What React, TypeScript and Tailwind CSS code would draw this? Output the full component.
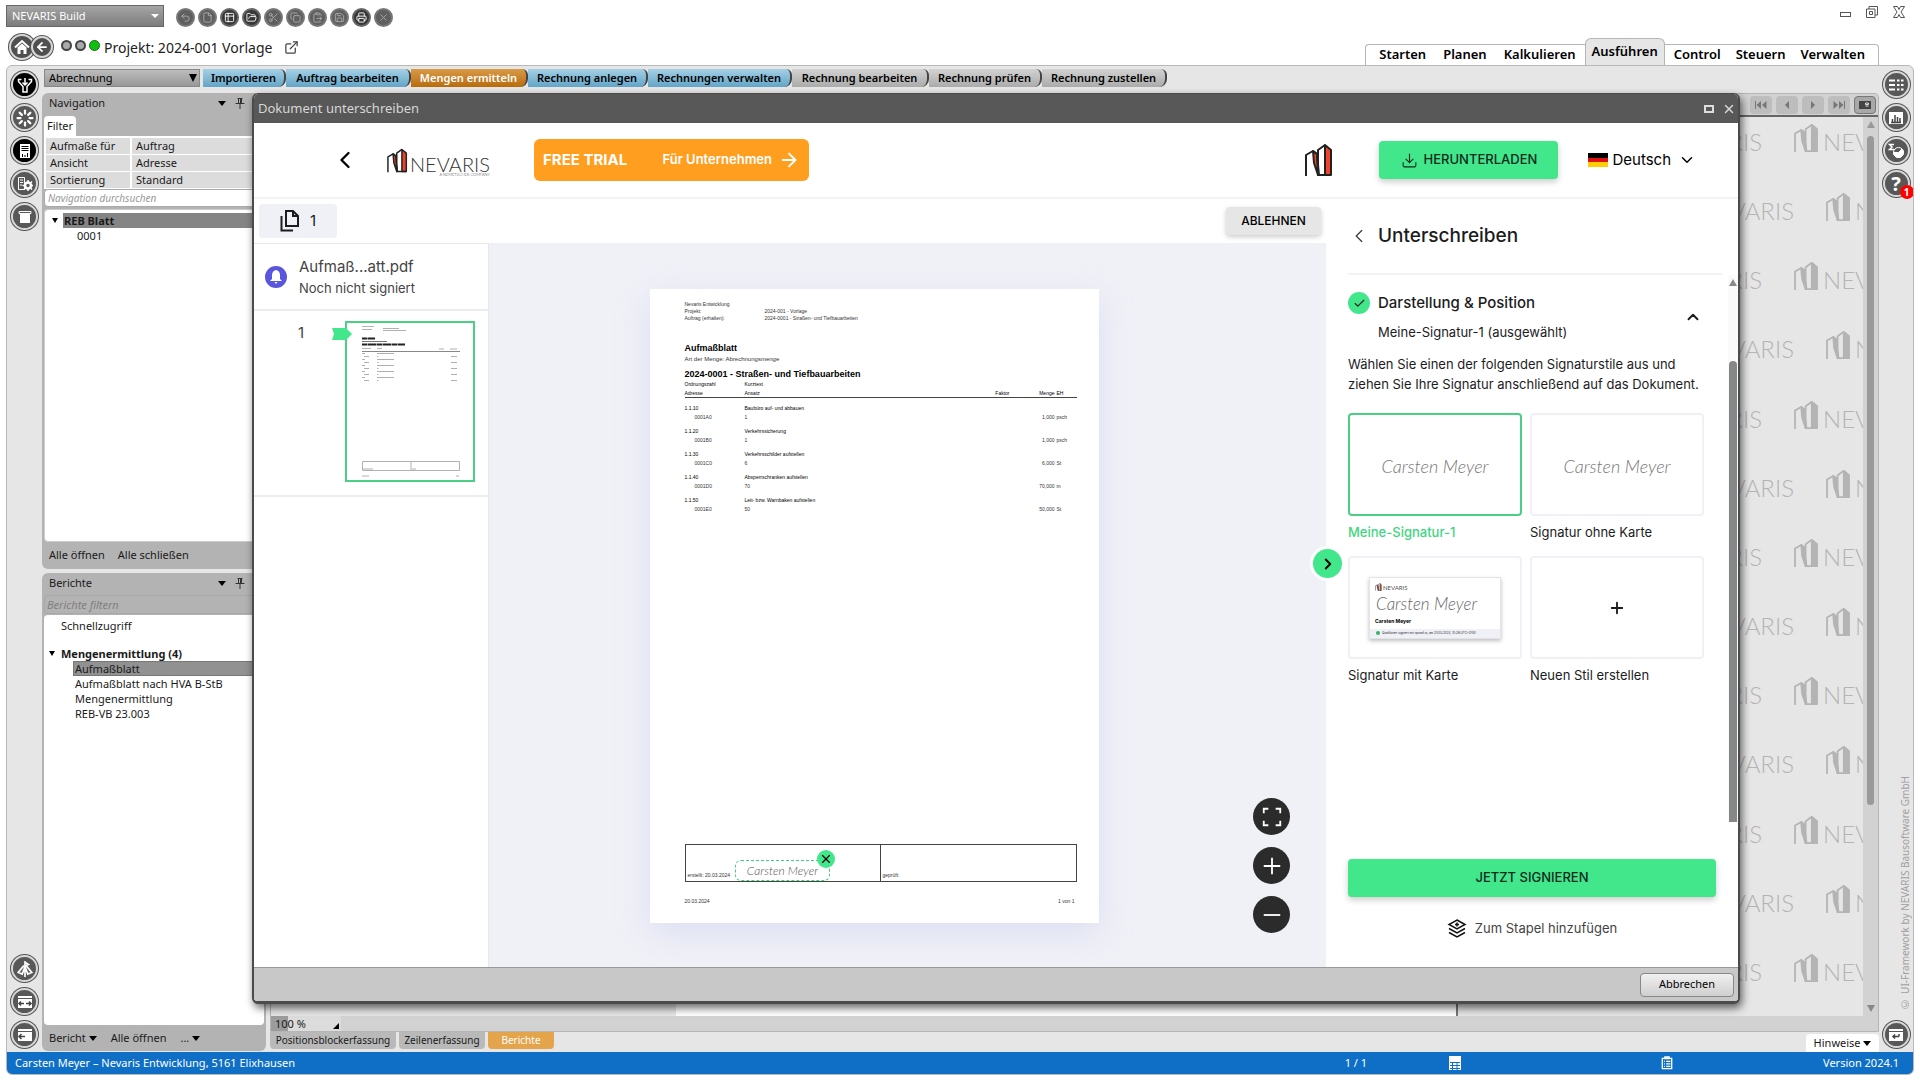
import type { ReactNode } from "react";
import {
  ArrowLeft,
  ArrowRight,
  Check,
  ChevronDown,
  ChevronLeft,
  ChevronRight,
  ChevronUp,
  ClipboardPaste,
  Copy,
  Download,
  ExternalLink,
  File,
  FolderOpen,
  Loader,
  Printer,
  Plus,
  Save,
  Scissors,
  Table2,
  Undo2,
  X,
} from "lucide-react";

const toolbar = [
  { label: "Rückgängig", icon: Undo2, active: false },
  { label: "Neu", icon: File, active: false },
  { label: "Tabelle", icon: Table2, active: true },
  { label: "Öffnen", icon: FolderOpen, active: true },
  { label: "Ausschneiden", icon: Scissors, active: false },
  { label: "Kopieren", icon: Copy, active: false },
  { label: "Einfügen", icon: ClipboardPaste, active: false },
  { label: "Speichern", icon: Save, active: false },
  { label: "Drucken", icon: Printer, active: true },
  { label: "Löschen", icon: X, active: false },
];

const workflow = [
  { label: "Importieren", tone: "blue", width: "w-[83px]" },
  { label: "Auftrag bearbeiten", tone: "blue", width: "w-[125px]" },
  { label: "Mengen ermitteln", tone: "orange", width: "w-[117px]" },
  { label: "Rechnung anlegen", tone: "blue", width: "w-[120px]" },
  { label: "Rechnungen verwalten", tone: "blue", width: "w-[144px]" },
  { label: "Rechnung bearbeiten", tone: "gray", width: "w-[137px]" },
  { label: "Rechnung prüfen", tone: "gray", width: "w-[113px]" },
  { label: "Rechnung zustellen", tone: "gray", width: "w-[125px]" },
];

const toneClass: Record<string, string> = {
  blue: "bg-linear-to-b from-[#a5d0e6] to-[#62a5c6] text-black",
  orange: "bg-linear-to-b from-[#d99a45] to-[#b86c07] text-white",
  gray: "bg-linear-to-b from-[#d2d2d2] to-[#ababab] text-black",
};

const positions = [
  { no: "1.1.10", text: "Baubüro auf- und abbauen", address: "0001A0", formula: "1", amount: "1,000", unit: "psch" },
  { no: "1.1.20", text: "Verkehrssicherung", address: "0001B0", formula: "1", amount: "1,000", unit: "psch" },
  { no: "1.1.30", text: "Verkehrsschilder aufstellen", address: "0001C0", formula: "6", amount: "6,000", unit: "St" },
  { no: "1.1.40", text: "Absperrschranken aufstellen", address: "0001D0", formula: "70", amount: "70,000", unit: "m" },
  { no: "1.1.50", text: "Leit- bzw. Warnbaken aufstellen", address: "0001E0", formula: "50", amount: "50,000", unit: "St" },
];

const zoomButtons = [
  { label: "Einpassen", d: "M3 8V3h5M16 3h5v5M21 16v5h-5M8 21H3v-5" },
  { label: "Vergrößern", d: "M12 3v18M3 12h18" },
  { label: "Verkleinern", d: "M3 12h18" },
];

function Towers({ className, stroke, fill }: { className: string; stroke: string; fill: string }) {
  return (
    <svg viewBox="0 0 28 34" className={className} fill="none" stroke={stroke} strokeWidth="2" strokeLinejoin="round">
      <path d="M8 8l4 3 1 21-4-12z" fill={fill} />
      <path d="M20 2l6 5v25h-6z" fill={fill} />
      <path d="M1 33V12l7-4 4 3 2 21M13 33V7l7-5M13 32h13" />
    </svg>
  );
}

function Watermark() {
  return (
    <div className="flex shrink-0 items-end gap-1 text-[#b4b4b4]">
      <Towers className="h-[30px] w-[25px]" stroke="#b4b4b4" fill="#b4b4b4" />
      <span className="font-['Lato'] text-2xl leading-[22px] font-light">NEVARIS</span>
    </div>
  );
}

function RailButton({ label, black, children }: { label: string; black?: boolean; children: ReactNode }) {
  return (
    <button
      aria-label={label}
      className={`relative flex size-[27px] shrink-0 items-center justify-center rounded-full border-2 border-[#d8d8d8] text-white ring-1 ring-[#555] ${
        black ? "bg-black" : "bg-[#585858]"
      }`}
    >
      {children}
    </button>
  );
}

function Pin() {
  return (
    <svg viewBox="0 0 12 12" className="size-3" fill="none" stroke="#333" strokeWidth="1">
      <path d="M3.500 1.500h5M4.500 1.500v5M7.500 1.500v5M6.500 2v4M1.500 6.500h9M6 6.500V12" />
    </svg>
  );
}

function Caret({ className = "" }: { className?: string }) {
  return <span className={`inline-block border-x-4 border-t-[5px] border-x-transparent border-t-black ${className}`} />;
}

function PanelHeader({ title }: { title: string }) {
  return (
    <div className="flex h-5 items-center pr-5 pl-[7px]">
      <h2 className="flex-1">{title}</h2>
      <button aria-label={`${title} Menü`} className="mr-2 flex">
        <Caret />
      </button>
      <button aria-label={`${title} anheften`}>
        <Pin />
      </button>
    </div>
  );
}

function TitleBar() {
  return (
    <div className="flex h-[65px] shrink-0 justify-between px-[6px]">
      <div>
        <div className="flex h-[28px] items-center gap-3 pt-1">
          <div className="relative">
            <select
              aria-label="Anwendung"
              className="h-[22px] w-[158px] appearance-none border border-[#666] bg-linear-to-b from-[#a5a5a5] to-[#7d7d7d] pl-[5px] text-[11px] text-white"
            >
              <option>NEVARIS Build</option>
            </select>
            <span className="pointer-events-none absolute top-[9px] right-[5px] border-x-4 border-t-4 border-x-transparent border-t-white" />
          </div>
          <div className="flex gap-[3px] pt-[2px]">
            {toolbar.map(({ label, icon: Icon, active }) => (
              <button
                key={label}
                aria-label={label}
                className={`flex size-[19px] items-center justify-center rounded-full border-2 ${
                  active ? "border-[#666] bg-[#383838] text-white" : "border-[#777] bg-[#5f5f5f] text-[#aaa]"
                }`}
              >
                <Icon className="size-[11px]" />
              </button>
            ))}
          </div>
        </div>
        <div className="flex h-[37px] items-center pt-px pl-[3px] text-[14px] text-[#222]">
          <button aria-label="Start" className="flex size-[26px] items-center justify-center rounded-full border-2 border-[#d8d8d8] bg-[#505050] text-white ring-1 ring-[#555]">
            <svg viewBox="0 0 16 16" className="size-4" fill="none" stroke="currentColor" strokeWidth="2">
              <path d="M1 8.500L8 2l7 6.500" />
              <path d="M3.500 8.500L8 4.500l4.500 4V15H9.500v-4h-3v4h-3z" fill="currentColor" stroke="none" />
            </svg>
          </button>
          <button aria-label="Zurück" className="-ml-1 flex size-[22px] items-center justify-center rounded-full border-2 border-[#d8d8d8] bg-[#505050] text-white ring-1 ring-[#555]">
            <ArrowLeft className="size-[14px]" strokeWidth={3} />
          </button>
          <div className="mb-1 ml-2 flex gap-[3px]">
            <span className="size-[11px] rounded-full border-2 border-[#444] bg-[#aaa]" />
            <span className="size-[11px] rounded-full border-2 border-[#444] bg-[#aaa]" />
            <span className="size-[11px] rounded-full border border-[#157015] bg-[#10c010]" />
          </div>
          <h1 className="ml-1">Projekt: 2024-001 Vorlage</h1>
          <a href="#extern" aria-label="In neuem Fenster öffnen" className="ml-3 text-[#444]">
            <ExternalLink className="size-[15px]" strokeWidth={2} />
          </a>
        </div>
      </div>
      <div className="flex flex-col items-end justify-between">
        <div className="flex items-center gap-[15px] pt-[6px] pr-[9px] text-[#555]">
          <button aria-label="Minimieren" className="mt-1 h-[5px] w-[11px] border border-[#555]" />
          <button aria-label="Wiederherstellen">
            <svg viewBox="0 0 12 12" className="size-3" fill="none" stroke="currentColor">
              <path d="M3 3V.500h8.500V9H9M.500 3H9v8.500H.500zM3.500 5.500h3v3h-3z" />
            </svg>
          </button>
          <button aria-label="Schließen">
            <svg viewBox="0 0 12 12" className="size-3" fill="none" stroke="currentColor">
              <path d="M.500.500h4L6 3.500l1.500-3h4L8 6l3.500 5.500h-4L6 8.500l-1.500 3h-4L4 6z" />
            </svg>
          </button>
        </div>
        <nav className="mr-[35px] flex items-end text-[13px] font-semibold text-black">
          <div className="flex h-[21px] items-center gap-[17px] rounded-tl border-t border-l border-[#b5b5b5] pr-[9px] pl-[13px]">
            <a href="#starten">Starten</a>
            <a href="#planen">Planen</a>
            <a href="#kalkulieren">Kalkulieren</a>
          </div>
          <a href="#ausfuehren" aria-current="page" className="flex h-[27px] items-center rounded-t-md border border-b-0 border-[#b5b5b5] bg-[#e6e6e6] px-[6px]">
            Ausführen
          </a>
          <div className="flex h-[21px] items-center gap-[15px] rounded-tr border-t border-r border-[#b5b5b5] pr-[13px] pl-[9px]">
            <a href="#control">Control</a>
            <a href="#steuern">Steuern</a>
            <a href="#verwalten">Verwalten</a>
          </div>
        </nav>
      </div>
    </div>
  );
}

function WindowGlyph({ d }: { d: string }) {
  return (
    <svg viewBox="0 0 16 16" className="size-4">
      <path d="M1 2h14v2H1zM1 5h14v9H1z" fill="currentColor" />
      <path d={d} fill="none" stroke="#444" strokeWidth="1.500" />
    </svg>
  );
}

function LeftRail() {
  return (
    <aside className="flex w-[35px] shrink-0 flex-col items-center gap-[6px] pt-[5px] pb-1">
      <RailButton label="Filter" black>
        <svg viewBox="0 0 16 16" className="size-4" fill="none" stroke="currentColor" strokeWidth="1.500">
          <path d="M4.500 2.500h-3v2l4.500 5V15h4V9.500l4.500-5v-2h-3M8 1v7M5.500 5.500L8 8l2.500-2.500" />
        </svg>
      </RailButton>
      <RailButton label="Aktualisieren">
        <Loader className="size-[18px]" strokeWidth={3} />
      </RailButton>
      <RailButton label="Bericht" black>
        <svg viewBox="0 0 16 16" className="size-4" fill="none">
          <path d="M3 1h10v14H3z" fill="#fff" />
          <path d="M4.500 3.500h7M4.500 5.500h7M4.500 7.500h7M5.500 14v-3M8 14v-2M10.500 14v-4" stroke="#000" />
        </svg>
      </RailButton>
      <RailButton label="Einstellungen">
        <svg viewBox="0 0 16 16" className="size-4" fill="none" stroke="currentColor">
          <path d="M1.500 1.500h6v12h-6zM3 4h3M3 6.500h3M3 9h2" />
          <circle cx="11" cy="9.500" r="3" strokeWidth="2.500" />
          <path d="M11 4v2M11 13v2M5.500 9.500h2M14.500 9.500h1.500M7 5.500l1.500 1.500M13.500 12l1.500 1.500M7 13.500l1.500-1.500M13.500 7L15 5.500" strokeWidth="1.500" />
        </svg>
      </RailButton>
      <RailButton label="Ablage">
        <svg viewBox="0 0 16 16" className="size-4">
          <path d="M2 2.500h12v2H2z" fill="none" stroke="#fff" />
          <path d="M3 5h10v9H3z" fill="#fff" />
        </svg>
      </RailButton>
      <div className="flex-1" />
      <RailButton label="Kompass">
        <svg viewBox="0 0 16 16" className="size-[18px]" fill="none" stroke="currentColor" strokeWidth="1.500">
          <path d="M8 1v14M8 2l3 2-3 1zM7 5l-5 6 3.500 1.500L8 6l2.500 6.500L14 11 9 5" />
        </svg>
      </RailButton>
      <RailButton label="Fensterbreite">
        <WindowGlyph d="M2 9.500h5M9 9.500h5M4 7.500l-2 2 2 2M12 7.500l2 2-2 2" />
      </RailButton>
      <RailButton label="Einklappen">
        <WindowGlyph d="M2 9.500h6M4.500 7l-2.500 2.500L4.500 12" />
      </RailButton>
    </aside>
  );
}

function NavigationPanel() {
  return (
    <section className="flex h-[476px] flex-col rounded-md bg-[#b3b3b3]">
      <PanelHeader title="Navigation" />
      <div className="flex h-[23px] items-end pl-[2px]">
        <button className="h-5 rounded-t bg-white px-[3px]">Filter</button>
      </div>
      <div className="mx-[2px] bg-white pt-px">
        <table className="w-full border-separate border-spacing-x-[2px] border-spacing-y-px text-left">
          <tbody>
            {[
              ["Aufmaße für", "Auftrag"],
              ["Ansicht", "Adresse"],
              ["Sortierung", "Standard"],
            ].map(([name, value]) => (
              <tr key={name} className="h-4">
                <th className="w-[84px] bg-[#dcdcdc] pl-1 leading-4 font-normal">{name}</th>
                <td className="bg-[#dcdcdc] pl-1 leading-4">{value}</td>
              </tr>
            ))}
          </tbody>
        </table>
      </div>
      <input
        aria-label="Navigation durchsuchen"
        placeholder="Navigation durchsuchen"
        className="mx-[2px] h-[18px] rounded border border-[#aaa] bg-white pl-[3px] text-[10px] italic placeholder:text-[#999]"
      />
      <div className="mx-[2px] mt-[2px] flex-1 rounded border border-[#ccc] bg-white pt-[3px]">
        <button className="flex w-full items-center pl-[7px] text-left font-bold">
          <Caret className="mr-[5px] border-x-[3px] border-t-4" />
          <span className="h-[15px] flex-1 bg-[#858585] pl-px leading-[15px]">REB Blatt</span>
        </button>
        <button className="block pl-[32px] leading-[15px]">0001</button>
      </div>
      <div className="flex h-[27px] items-center gap-[13px] pl-[7px]">
        <button>Alle öffnen</button>
        <button>Alle schließen</button>
      </div>
    </section>
  );
}

function ReportsPanel() {
  return (
    <section className="flex min-h-0 flex-1 flex-col rounded-md bg-[#b3b3b3]">
      <PanelHeader title="Berichte" />
      <input
        aria-label="Berichte filtern"
        placeholder="Berichte filtern"
        className="mx-[2px] mt-[2px] h-[19px] rounded border border-[#a8a8a8] pl-[2px] text-[11px] italic placeholder:text-[#808080]"
      />
      <div className="mx-[2px] mt-px flex-1 rounded bg-white pt-[3px] leading-[15px]">
        <button className="block pl-[17px]">Schnellzugriff</button>
        <button className="mt-[13px] flex items-center pl-[5px] font-bold">
          <Caret className="mr-[6px] border-x-[3px] border-t-4" />
          Mengenermittlung (4)
        </button>
        <div className="flex flex-col items-start pl-[29px]">
          <button className="w-full border border-[#777] bg-[#919191] pl-px text-left leading-[13px]">Aufmaßblatt</button>
          <button className="pl-[2px]">Aufmaßblatt nach HVA B-StB</button>
          <button className="pl-[2px]">Mengenermittlung</button>
          <button className="pl-[2px]">REB-VB 23.003</button>
        </div>
      </div>
      <div className="flex h-[26px] items-center gap-[14px] pl-[7px]">
        <button>
          Bericht <Caret className="align-middle" />
        </button>
        <button>Alle öffnen</button>
        <button>
          ... <Caret className="align-middle" />
        </button>
      </div>
    </section>
  );
}

function Preview() {
  return (
    <section className="flex min-w-0 flex-1 flex-col">
      <div className="flex min-h-0 flex-1 flex-col rounded-t border border-[#b5b5b5] bg-[#d2d2d2]">
        <div className="flex h-[23px] shrink-0 items-center justify-end gap-1 border-b-2 border-[#666] pr-[2px] text-[9px] text-[#777]">
          {["Anfang", "Zurück", "Weiter", "Ende"].map((label, i) => (
            <button key={label} aria-label={label} className="flex h-[18px] w-[22px] items-center justify-center rounded bg-[#bdbdbd]">
              <svg viewBox="0 0 12 8" className="h-2 w-3" fill="currentColor">
                <path
                  d={
                    [
                      "M0 0h1v8H0zM6 0v8L1.500 4zM11.500 0v8L7 4z",
                      "M8 0v8L4 4z",
                      "M4 0l4 4-4 4z",
                      "M.500 0L5 4 .500 8zM6 0l4.500 4L6 8zM11 0h1v8h-1z",
                    ][i]
                  }
                />
              </svg>
            </button>
          ))}
          <button aria-label="Vollbild" className="flex h-[18px] w-[22px] items-center justify-center rounded border border-[#777] bg-[#a8a8a8]">
            <svg viewBox="0 0 12 8" className="h-2 w-3">
              <path d="M0 0h12v8H0z" fill="#444" />
              <path d="M6.500 2h3v1.500h-3zM6.500 5h3" stroke="#ddd" fill="none" />
            </svg>
          </button>
        </div>
        <div className="flex min-h-0 flex-1">
          <div className="relative flex min-w-0 flex-1 flex-col overflow-hidden bg-[#e6e6e6]">
            {Array.from({ length: 13 }, (_, row) => (
              <div key={row} className={`flex min-h-0 flex-1 items-start justify-end gap-8 pt-[6px] ${row % 2 ? "-mr-[88px]" : "-mr-[56px]"}`}>
                <Watermark />
                <Watermark />
              </div>
            ))}
            <div className="absolute bottom-0 left-[405px] h-3 w-[782px] border-r-2 border-[#777] bg-white" />
          </div>
          <div className="flex w-[15px] flex-col items-center pt-1 text-[8px] text-[#888]">
            <span className="border-x-4 border-b-[7px] border-x-transparent border-b-[#999]" />
            <span className="mt-2 w-[7px] flex-1 rounded-full bg-[#999]" />
            <span className="mt-[200px] mb-1 border-x-4 border-t-[7px] border-x-transparent border-t-[#888]" />
          </div>
        </div>
        <div className="flex h-[15px] shrink-0 items-center">
          <label className="relative flex h-[15px] w-[70px] items-center bg-[#dcdcdc]">
            <span className="sr-only">Zoom</span>
            <input defaultValue="100 %" className="h-[15px] w-full bg-linear-to-r from-[#9c9c9c] from-25% to-transparent to-25% pl-1 text-[11px] leading-[15px]" />
            <span className="absolute right-[2px] bottom-[2px] border-b-[6px] border-l-[6px] border-b-black border-l-transparent" />
          </label>
        </div>
      </div>
      <div className="flex h-5 shrink-0 items-start gap-[3px]">
        <button className="h-[17px] w-[126px] rounded-b bg-[#b9b9b9] text-[10px] leading-[17px]">Positionsblockerfassung</button>
        <button className="h-[17px] w-[86px] rounded-b bg-[#b9b9b9] text-[10px] leading-[17px]">Zeilenerfassung</button>
        <button className="h-[17px] w-[66px] rounded-b bg-[#e3a44b] text-[10px] leading-[17px] text-white">Berichte</button>
        <div className="flex-1" />
        <button className="mt-[2px] h-[18px] w-[73px] rounded-t bg-white">
          Hinweise <Caret className="align-middle" />
        </button>
      </div>
    </section>
  );
}

function RightRail() {
  return (
    <aside className="flex w-[34px] shrink-0 flex-col items-center gap-[6px] pt-[5px] pb-1">
      <RailButton label="Liste">
        <svg viewBox="0 0 16 16" className="size-4" stroke="currentColor" strokeWidth="2">
          <path d="M1 3.500h6M1 8h6M1 12.500h6M9 3.500h2.500M9 8h2.500M9 12.500h2.500M13 3.500h2.500M13 8h2.500M13 12.500h2.500" />
        </svg>
      </RailButton>
      <RailButton label="Diagramm">
        <svg viewBox="0 0 16 16" className="size-4">
          <path d="M1 2h14v12H1z" fill="currentColor" />
          <path d="M3 12.500h10M4.500 12V9M7 12V5M9.500 12V7M12 12V8" stroke="#444" strokeWidth="1.500" />
        </svg>
      </RailButton>
      <RailButton label="Summen">
        <svg viewBox="0 0 16 16" className="size-4" fill="none" stroke="currentColor">
          <path d="M6 1.500H1.500L4 4 1.500 6.500H6" strokeWidth="1.500" />
          <circle cx="10.500" cy="9.500" r="5" />
          <path d="M10.500 9.500l3.500-3.500a5 5 0 1 1-8.500 3.500z" fill="currentColor" />
        </svg>
      </RailButton>
      <RailButton label="Hilfe">
        <span className="text-xl leading-5 font-bold">?</span>
        <span className="absolute -right-[6px] -bottom-1 flex size-[14px] items-center justify-center rounded-full bg-[#f00] text-[10px] leading-[14px] font-bold">
          1
        </span>
      </RailButton>
      <div className="mr-[2px] flex flex-1 items-end self-end pb-1">
        <span className="rotate-180 text-[10px] leading-3 text-[#a0a0a0] [writing-mode:vertical-rl]">
          © UI-Framework by NEVARIS Bausoftware GmbH
        </span>
      </div>
      <RailButton label="Ausklappen">
        <WindowGlyph d="M5 9.500h6M7 7.500l-2 2 2 2M11 9.500V7" />
      </RailButton>
    </aside>
  );
}

function SignatureStyle({ selected, label, children }: { selected?: boolean; label: string; children: ReactNode }) {
  return (
    <button className="group flex flex-col gap-2 text-left" aria-pressed={selected}>
      <span
        className={`flex h-[103px] w-full items-center justify-center rounded border-2 bg-white ${
          selected ? "border-[#4bcf84]" : "border-[#f0f1f7]"
        }`}
      >
        {children}
      </span>
      <span className={`leading-4 ${selected ? "font-medium text-[#3fd681]" : ""}`}>{label}</span>
    </button>
  );
}

function Thumbnail() {
  return (
    <svg viewBox="0 0 126 157" className="h-[157px] w-[126px]" fill="none" stroke="#b0b0b0">
      <path d="M15 3.500h12M15 6.500h10M36 5.500h16M36 7.500h23M15 25.500h9M30 25.500h5M92 26h5M103 26h7" />
      <path d="M15 18.500h25" stroke="#777" />
      <path d="M15 15.500h13M15 21.500h43" stroke="#222" strokeWidth="2" strokeDasharray="5 .5 9 .5" />
      <path d="M15 28.500h98" stroke="#888" />
      {[0, 6, 12, 18, 24].map((y) => (
        <path key={y} d={`M15 ${30.5 + y}h3M17 ${33.5 + y}h5M30 ${30.5 + y}h17M30 ${33.5 + y}h1.500M104 ${33.5 + y}h6`} />
      ))}
      <path d="M15.500 138.500h97v9h-97zM64 138v10M16 146h10M65 146h4M15 153h7M109 153h3" />
    </svg>
  );
}

function DocumentPage() {
  return (
    <article className="relative flex h-[634px] w-[449px] flex-col bg-white pt-3 pr-[22px] pb-[18px] pl-[35px] font-['Liberation_Sans'] text-[5px] leading-[7px] text-[#333] shadow-[0_10px_30px_rgba(190,195,235,0.4)]">
      <dl className="grid grid-cols-[80px_1fr]">
        <dt className="col-span-2">Nevaris Entwicklung</dt>
        <dt>Projekt:</dt>
        <dd>2024-001 - Vorlage</dd>
        <dt>Auftrag (erhalten):</dt>
        <dd>2024-0001 - Straßen- und Tiefbauarbeiten</dd>
      </dl>
      <h2 className="mt-5 text-[9px] leading-[12px] font-bold text-black">Aufmaßblatt</h2>
      <p className="mt-[1px] text-[6px] leading-[8px]">Art der Menge: Abrechnungsmenge</p>
      <h3 className="mt-[5px] mb-[1px] text-[9px] leading-[12px] font-bold text-black">2024-0001 - Straßen- und Tiefbauarbeiten</h3>
      <table className="w-full table-fixed text-left">
        <colgroup>
          <col className="w-[60px]" />
          <col />
          <col className="w-[60px]" />
          <col className="w-[45px]" />
          <col className="w-[22px]" />
        </colgroup>
        <thead className="border-b border-[#444] text-black">
          <tr>
            <th className="pb-[2px] font-normal">Ordnungszahl</th>
            <th className="pb-[2px] font-normal">Kurztext</th>
          </tr>
          <tr>
            <th className="font-normal">Adresse</th>
            <th className="font-normal">Ansatz</th>
            <th className="text-right font-normal">Faktor</th>
            <th className="text-right font-normal">Menge</th>
            <th className="pl-[2px] font-normal">EH</th>
          </tr>
        </thead>
        {positions.map((p) => (
          <tbody key={p.no}>
            <tr className="text-black">
              <td className="pt-[7px]">{p.no}</td>
              <td className="pt-[7px]">{p.text}</td>
            </tr>
            <tr>
              <td className="pt-[2px] pl-[10px]">{p.address}</td>
              <td className="pt-[2px]">{p.formula}</td>
              <td />
              <td className="pt-[2px] text-right">{p.amount}</td>
              <td className="pt-[2px] pl-[2px]">{p.unit}</td>
            </tr>
          </tbody>
        ))}
      </table>
      <div className="mt-auto grid h-[38px] grid-cols-2 border border-[#444]">
        <div className="flex items-end border-r border-[#444] pb-[2px] pl-[2px]">
          <span>erstellt: 20.03.2024</span>
          <div className="relative -mb-[2px] ml-[5px] flex h-[21px] w-[95px] items-center justify-center rounded-md border border-dashed border-[#3fcf7d] font-['Lato'] text-[12px] font-light text-[#555] italic">
            Carsten Meyer
            <button aria-label="Signatur entfernen" className="absolute -top-[11px] -right-[6px] flex size-[18px] items-center justify-center rounded-full bg-[#42e68b] text-black">
              <X className="size-[14px]" />
            </button>
          </div>
        </div>
        <div className="flex items-end pb-[2px] pl-[2px]">geprüft:</div>
      </div>
      <div className="mt-4 flex justify-between pr-[2px]">
        <span>20.03.2024</span>
        <span>1 von 1</span>
      </div>
    </article>
  );
}

function SignPanel() {
  return (
    <aside className="relative flex w-[412px] shrink-0 flex-col bg-white text-[13px]">
      <button aria-label="Seitenleiste schließen" className="absolute top-[350px] -left-[13px] flex size-[29px] items-center justify-center rounded-full bg-[#42e68b] text-black ring-3 ring-white">
        <ChevronRight className="size-[18px]" strokeWidth={2.5} />
      </button>
      <div className="mr-4 ml-[22px] flex h-[76px] shrink-0 items-center gap-2 border-b-2 border-[#f2f3f6]">
        <button aria-label="Zurück">
          <ChevronLeft className="size-[22px] text-[#444]" strokeWidth={1.5} />
        </button>
        <h2 className="text-[19px] font-medium">Unterschreiben</h2>
      </div>
      <div className="flex min-h-0 flex-1">
        <div className="min-w-0 flex-1 pt-[17px] pl-[22px]">
          <div className="flex items-center pr-[26px]">
            <div className="flex-1">
              <h3 className="flex items-center gap-2 text-[15px] leading-[22px] font-medium">
                <span className="flex size-[22px] items-center justify-center rounded-full bg-[#42e68b]">
                  <Check className="size-[13px]" strokeWidth={2} />
                </span>
                Darstellung &amp; Position
              </h3>
              <p className="mt-2 pl-[30px] leading-5">Meine-Signatur-1 (ausgewählt)</p>
            </div>
            <button aria-label="Abschnitt einklappen">
              <ChevronUp className="size-[18px]" strokeWidth={2.5} />
            </button>
          </div>
          <p className="mt-3 leading-5 whitespace-nowrap">
            Wählen Sie einen der folgenden Signaturstile aus und
            <br />
            ziehen Sie Ihre Signatur anschließend auf das Dokument.
          </p>
          <div className="mt-[19px] mr-6 grid grid-cols-2 gap-x-2 gap-y-4">
            <SignatureStyle selected label="Meine-Signatur-1">
              <span className="pt-1 font-['Lato'] text-[18px] font-light text-[#777] italic">Carsten Meyer</span>
            </SignatureStyle>
            <SignatureStyle label="Signatur ohne Karte">
              <span className="pt-1 font-['Lato'] text-[18px] font-light text-[#777] italic">Carsten Meyer</span>
            </SignatureStyle>
            <SignatureStyle label="Signatur mit Karte">
              <span className="flex h-[62px] w-[132px] flex-col border border-[#e3e3e8] bg-white shadow-[0_2px_4px_rgba(0,0,0,0.25)]">
                <span className="flex items-end gap-px pt-[5px] pl-[5px] font-['Lato'] text-[6px] leading-[7px] text-[#555]">
                  <Towers className="h-2 w-[7px]" stroke="#333" fill="#e8452c" />
                  NEVARIS
                </span>
                <span className="pl-[6px] font-['Lato'] text-[17px] leading-[26px] font-light text-[#666] italic">Carsten Meyer</span>
                <span className="pl-[5px] text-[5px] leading-[8px] font-bold text-black">Carsten Meyer</span>
                <span className="mt-auto flex h-[9px] items-center gap-[2px] bg-[#f0f1f7] pl-[6px] text-[3px] whitespace-nowrap">
                  <span className="size-1 rounded-full bg-[#35b36c]" />
                  Qualifiziert signiert mit sproof.io, am 20.03.2024, 10:26 UTC+0100
                </span>
              </span>
            </SignatureStyle>
            <SignatureStyle label="Neuen Stil erstellen">
              <Plus className="size-[18px]" strokeWidth={2.5} />
            </SignatureStyle>
          </div>
        </div>
        <div className="flex w-[10px] flex-col items-center bg-[#fafafa] pt-1">
          <span className="border-x-4 border-b-[7px] border-x-transparent border-b-[#888]" />
          <span className="mt-[75px] w-2 flex-1 rounded-t bg-[#858789]" />
        </div>
      </div>
      <div className="flex h-[145px] shrink-0 flex-col items-center pt-[37px] pr-[22px] pl-[22px]">
        <button className="h-[38px] w-full rounded bg-[#42e68b] font-medium text-[#0d2b1b] shadow-[0_3px_6px_rgba(0,0,0,0.2)]">
          JETZT SIGNIEREN
        </button>
        <button className="mt-[22px] flex items-center gap-2 text-[#444]">
          <svg viewBox="0 0 20 20" className="size-5" fill="none" stroke="#111" strokeWidth="1.500">
            <path d="M10 1l8 4.500-8 4.500-8-4.500zM2 9.500l8 4.500 8-4.500M2 13.500l8 4.500 8-4.500M10 3.500v4M8 5.500h4" />
          </svg>
          Zum Stapel hinzufügen
        </button>
      </div>
    </aside>
  );
}

function SignDialog() {
  return (
    <div
      role="dialog"
      aria-label="Dokument unterschreiben"
      className="absolute top-[93px] right-[180px] bottom-[76px] left-[252px] flex flex-col overflow-hidden rounded-md border-2 border-t border-b-[3px] border-[#4b4b4b] bg-white shadow-[2px_4px_8px_rgba(0,0,0,0.6)]"
    >
      <div className="flex h-[29px] shrink-0 items-center gap-2 bg-[#585858] pr-[2px] pl-1 text-[#d6d6d6]">
        <h2 className="flex-1 text-[13px]">Dokument unterschreiben</h2>
        <button aria-label="Maximieren" className="h-2 w-[10px] border-2 border-[#ddd]" />
        <button aria-label="Schließen">
          <X className="size-[14px]" strokeWidth={2.5} />
        </button>
      </div>
      <div className="flex min-h-0 flex-1 flex-col font-['Inter'] text-[#1c1c1e]">
        <header className="flex h-[76px] shrink-0 items-center border-b-2 border-[#f2f4f8] pr-[42px] pl-[77px]">
          <button aria-label="Zurück">
            <ChevronLeft className="size-7 text-black" strokeWidth={2} />
          </button>
          <a href="#nevaris" className="ml-7 flex w-[103px] items-end gap-[2px] text-[#333]">
            <Towers className="h-[25px] w-[21px]" stroke="#222" fill="#e8452c" />
            <span className="relative font-['Lato'] text-[20px] leading-[18px] font-light">
              NEVARIS
              <span className="absolute top-[18px] right-0 text-[4px] leading-[4px] whitespace-nowrap">A NEMETSCHEK COMPANY</span>
            </span>
          </a>
          <button className="ml-[44px] flex h-[42px] w-[275px] items-center rounded-md bg-[#ff9e1f] px-[9px] text-white">
            <span className="flex-1 text-left text-[15px] font-bold">FREE TRIAL</span>
            <span className="text-[13px] font-semibold">Für Unternehmen</span>
            <ArrowRight className="ml-[6px] size-[22px]" strokeWidth={2} />
          </button>
          <div className="flex-1" />
          <Towers className="h-[34px] w-[28px]" stroke="#222" fill="#f0452a" />
          <button className="ml-[46px] flex h-[38px] w-[179px] items-center justify-center gap-[6px] rounded bg-[#42e68b] text-[13px] font-medium text-[#0d2b1b] shadow-[0_3px_6px_rgba(0,0,0,0.2)]">
            <Download className="size-[17px]" strokeWidth={1.5} />
            HERUNTERLADEN
          </button>
          <button className="ml-[30px] flex items-center text-[15px] text-black">
            <span className="mr-1 flex h-[14px] w-5 flex-col">
              <span className="flex-1 bg-black" />
              <span className="flex-1 bg-[#dd1111]" />
              <span className="flex-1 bg-[#ffce00]" />
            </span>
            Deutsch
            <ChevronDown className="ml-[7px] size-[18px]" strokeWidth={2} />
          </button>
        </header>
        <div className="flex min-h-0 flex-1">
          <div className="flex min-w-0 flex-1 flex-col">
            <div className="flex h-[44px] shrink-0 items-center justify-between pr-[5px] pl-[5px]">
              <button className="flex h-[34px] w-[78px] items-center justify-center gap-[10px] rounded bg-[#f0f1f7] text-[15px]">
                <svg viewBox="0 0 20 22" className="h-[22px] w-5" fill="none" stroke="currentColor" strokeWidth="2">
                  <path d="M6 1h7l5 5v10H6zM13 1v5h5M1.500 6v14.500H13" />
                </svg>
                1
              </button>
              <button className="h-7 w-[95px] rounded bg-[#e6e6e6] text-[12px] font-medium text-black shadow-[0_2px_5px_rgba(0,0,0,0.2)]">
                ABLEHNEN
              </button>
            </div>
            <div className="flex min-h-0 flex-1">
              <div className="w-[235px] shrink-0 border-t border-r border-[#e8e8ec]">
                <div className="flex h-[67px] items-center gap-3 border-b-2 border-[#ececee] pl-[11px]">
                  <span className="flex size-[22px] items-center justify-center rounded-full bg-[#5a55dd]">
                    <svg viewBox="0 0 14 16" className="h-4 w-[14px]" fill="#fff">
                      <path d="M7 1c3 .500 4 3 4 5v4l2 2H1l2-2V6c0-2 1-4.500 4-5zM5.500 13h3L7 15z" />
                    </svg>
                  </span>
                  <div className="text-[#444]">
                    <p className="text-[15px] leading-[22px]">Aufmaß...att.pdf</p>
                    <p className="text-[13px] leading-5">Noch nicht signiert</p>
                  </div>
                </div>
                <div className="flex h-[186px] justify-end border-b-2 border-[#ececee] pt-[10px] pr-[13px]">
                  <span className="mr-[28px] text-[15px] leading-6 text-[#444]">1</span>
                  <svg viewBox="0 0 20 12" className="z-10 mt-[7px] -mr-[7px] h-3 w-5" fill="#42e68b">
                    <path d="M0 0h14l6 6-6 6H0l2-6z" />
                  </svg>
                  <button aria-label="Seite 1" className="h-[161px] w-[130px] border-2 border-[#4bcf84]">
                    <Thumbnail />
                  </button>
                </div>
              </div>
              <div className="relative flex flex-1 justify-center bg-[#f0f1f7] pt-[46px] pr-[67px]">
                <DocumentPage />
                <div className="absolute right-[36px] bottom-[34px] flex flex-col gap-3">
                  {zoomButtons.map(({ label, d }) => (
                    <button key={label} aria-label={label} className="flex size-[37px] items-center justify-center rounded-full bg-[#2b2b2b]">
                      <svg viewBox="0 0 24 24" className="size-[22px]" fill="none" stroke="#fff" strokeWidth="2">
                        <path d={d} />
                      </svg>
                    </button>
                  ))}
                </div>
              </div>
            </div>
          </div>
          <SignPanel />
        </div>
      </div>
      <footer className="flex h-[34px] shrink-0 items-center justify-end border-t border-[#999] bg-[#c8c8c8] pr-1">
        <button className="h-6 w-[94px] rounded-sm border border-[#888] bg-linear-to-b from-[#f0f0f0] to-[#cfcfcf] text-[11px] text-black">Abbrechen</button>
      </footer>
    </div>
  );
}

export default function App() {
  return (
    <div className="relative flex h-screen flex-col bg-white pb-[5px] font-['Noto_Sans','Open_Sans',sans-serif] text-[11px] text-[#1a1a1a]">
      <TitleBar />
      <main className="mx-[6px] flex min-h-0 flex-1 flex-col overflow-hidden rounded-md border border-[#b8b8b8] bg-[#e6e6e6]">
        <div className="flex min-h-0 flex-1">
          <LeftRail />
          <div className="flex min-w-0 flex-1 flex-col">
            <div className="flex h-[27px] items-start pt-[3px] pl-[2px]">
              <div className="relative mr-[3px]">
                <select
                  aria-label="Bereich"
                  className="h-[18px] w-[156px] appearance-none border border-[#888] bg-linear-to-b from-[#bcbcbc] to-[#999] pl-1 text-[11px] leading-4 text-black"
                >
                  <option>Abrechnung</option>
                </select>
                <span className="pointer-events-none absolute top-[5px] right-[3px] border-x-4 border-t-8 border-x-transparent border-t-black" />
              </div>
              {workflow.map(({ label, tone, width }) => (
                <button key={label} className={`h-[18px] rounded-tr-md rounded-br-lg border-r-2 border-[#444] text-[11px] leading-4 font-semibold whitespace-nowrap ${width} ${toneClass[tone]}`}>
                  {label}
                </button>
              ))}
            </div>
            <div className="flex min-h-0 flex-1 gap-1">
              <div className="flex w-[224px] shrink-0 flex-col gap-1 pb-px">
                <NavigationPanel />
                <ReportsPanel />
              </div>
              <Preview />
            </div>
          </div>
          <RightRail />
        </div>
        <footer className="flex h-[22px] shrink-0 items-center bg-[#0f6fc6] pr-[14px] pl-2 text-[11px] text-white">
          <span className="flex-1">Carsten Meyer – Nevaris Entwicklung, 5161 Elixhausen</span>
          <span>1 / 1</span>
          <svg viewBox="0 0 14 14" className="ml-[81px] size-[14px]">
            <path d="M1 0h12v14H1z" fill="#fff" />
            <path d="M2 6.500h10M2 9.500h10M2 12.500h10M4.500 6v8M9 6v8" stroke="#0f6fc6" />
          </svg>
          <svg viewBox="0 0 14 16" className="ml-[199px] h-[14px] w-3" fill="none" stroke="#fff" strokeWidth="1.500">
            <path d="M1.500 2.500h11v12h-11zM4.500 1h5v2h-5zM3.500 6h1M3.500 9h1M3.500 12h1M6 6h5M6 9h5M6 12h5" />
          </svg>
          <span className="ml-[150px]">Version 2024.1</span>
        </footer>
      </main>
      <SignDialog />
    </div>
  );
}
